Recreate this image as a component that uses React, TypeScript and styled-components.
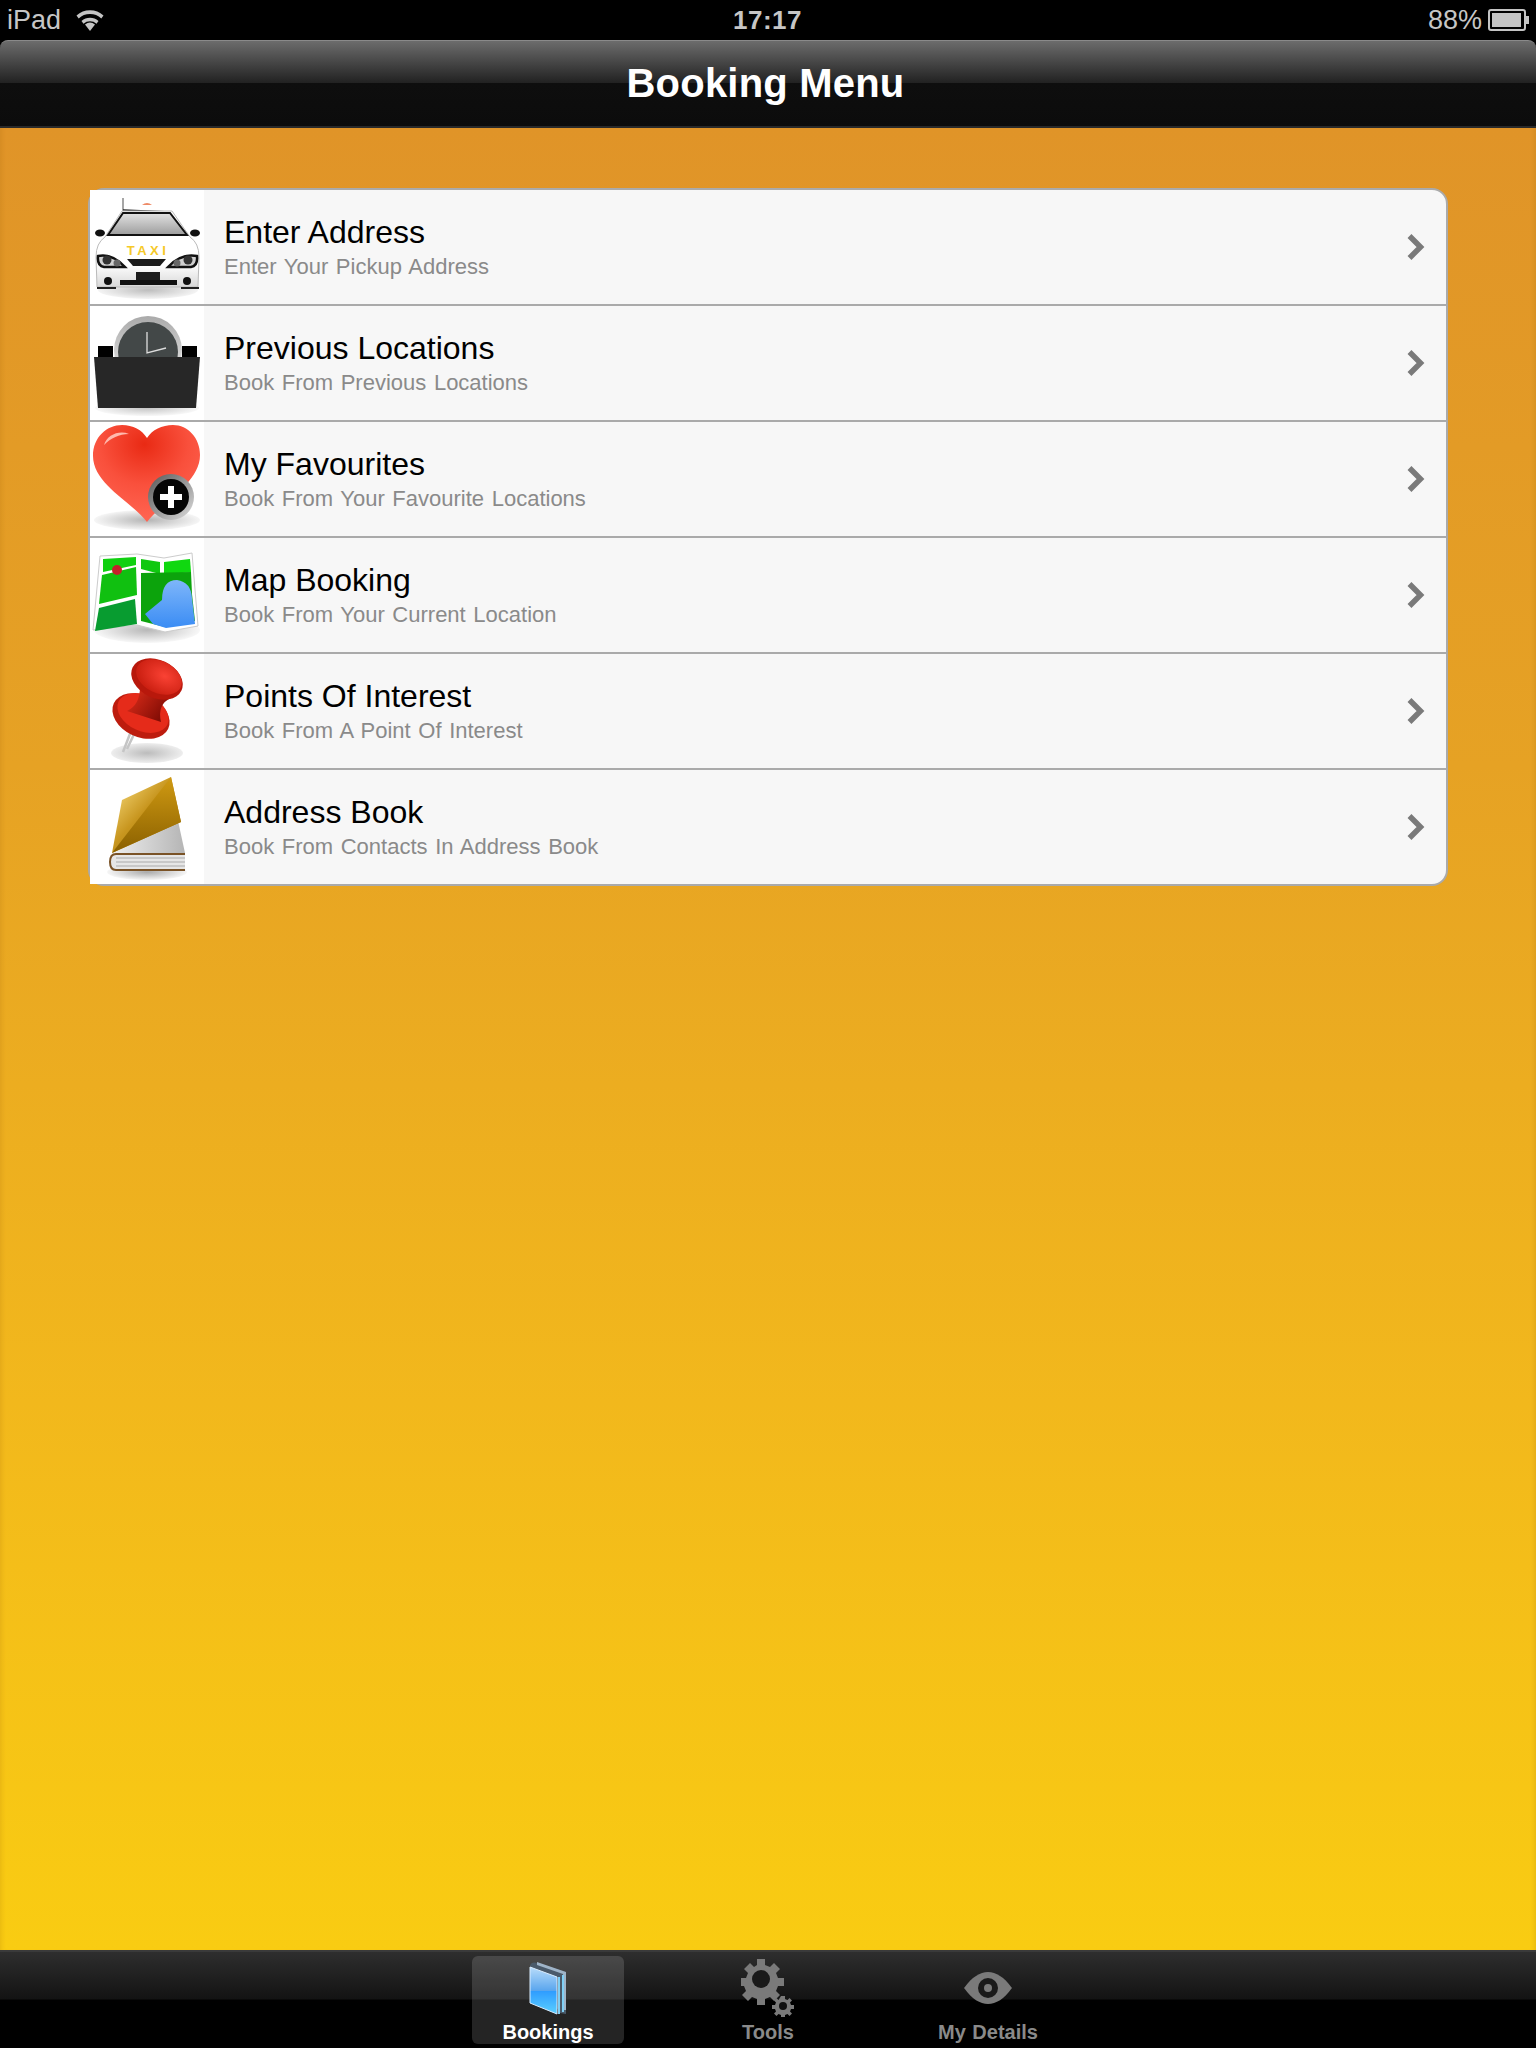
import React from "react";
import styled, { createGlobalStyle } from "styled-components";
import { ChevronRight } from "lucide-react";

const GlobalStyle = createGlobalStyle`
  html, body {
    margin: 0;
    padding: 0;
    background: #000;
    font-family: "Liberation Sans", Arial, sans-serif;
  }
`;

const TaxiIcon = () => (
  <IconSvg viewBox="0 0 114 114">
    <defs>
      <linearGradient id="taxiGlass" x1="0" y1="0" x2="0" y2="1">
        <stop offset="0" stopColor="#e2e2e2" />
        <stop offset="1" stopColor="#9d9d9d" />
      </linearGradient>
      <linearGradient id="taxiBody" x1="0" y1="0" x2="0" y2="1">
        <stop offset="0" stopColor="#fff" />
        <stop offset="0.7" stopColor="#fff" />
        <stop offset="1" stopColor="#d8d8d8" />
      </linearGradient>
      <radialGradient id="shadowFill" cx="0.5" cy="0.5" r="0.5">
        <stop offset="0" stopColor="#bdbdbd" />
        <stop offset="1" stopColor="#f4f4f4" />
      </radialGradient>
    </defs>
    <ellipse cx="58" cy="100" rx="50" ry="9" fill="url(#shadowFill)" />
    <path d="M33 8v14" stroke="#888" strokeWidth="1.5" />
    <path d="M52 15q5-4 10 0z" fill="#ee8a66" />
    <path d="M33 20l47 2" stroke="#222" strokeWidth="1.5" />
    <path d="M32 21h50l18 26q9 6 9 20l-1 30H7l-1-30q0-14 9-20z" fill="url(#taxiBody)" stroke="#bbb" strokeWidth="1" />
    <path d="M18 45l15-22h47l17 22z" fill="url(#taxiGlass)" stroke="#111" strokeWidth="2" />
    <ellipse cx="10" cy="43" rx="5" ry="3.5" fill="#111" />
    <ellipse cx="105" cy="43" rx="5" ry="3.5" fill="#111" />
    <TaxiLabel x="58" y="64.500" textAnchor="middle">TAXI</TaxiLabel>
    <path d="M8 66q14-3 27 11H14q-7-1-6-11z" fill="#d0d0d0" stroke="#111" strokeWidth="2.500" />
    <path d="M107 66q-16-3-29 11h23q7-1 6-11z" fill="#d0d0d0" stroke="#111" strokeWidth="2.500" />
    <circle cx="17" cy="70" r="4.500" fill="#333" />
    <circle cx="27" cy="73" r="3.500" fill="#666" />
    <circle cx="98" cy="70" r="4.500" fill="#333" />
    <circle cx="87" cy="73" r="3.500" fill="#666" />
    <path d="M37 69h39l-6 7H43z" fill="#1a1a1a" />
    <rect x="46" y="82" width="24" height="10" fill="#1c1c1c" />
    <rect x="30" y="90" width="57" height="5" fill="#111" />
    <circle cx="18" cy="91" r="4" fill="#111" />
    <circle cx="97" cy="91" r="4" fill="#111" />
    <path d="M7 98h19M91 98h18" stroke="#222" strokeWidth="2" />
  </IconSvg>
);

const ClockIcon = () => (
  <IconSvg viewBox="0 0 114 114">
    <defs>
      <linearGradient id="clockRing" x1="0" y1="0" x2="0" y2="1">
        <stop offset="0" stopColor="#aaa" />
        <stop offset="1" stopColor="#eee" />
      </linearGradient>
      <radialGradient id="clockShadow" cx="0.5" cy="0.5" r="0.5">
        <stop offset="0" stopColor="#c4c4c4" />
        <stop offset="1" stopColor="#f8f8f8" />
      </radialGradient>
    </defs>
    <ellipse cx="57" cy="102" rx="52" ry="8" fill="url(#clockShadow)" />
    <circle cx="58" cy="44" r="34" fill="url(#clockRing)" />
    <circle cx="58" cy="46" r="30" fill="#434848" />
    <path d="M57 26v21l19-5" fill="none" stroke="#ddd" strokeWidth="1.3" />
    <rect x="8" y="40" width="15" height="12" fill="#000" />
    <rect x="92" y="40" width="15" height="12" fill="#000" />
    <path d="M4 51h106l-4 51H8z" fill="#272727" />
  </IconSvg>
);

const HeartIcon = () => (
  <IconSvg viewBox="0 0 114 114">
    <defs>
      <radialGradient id="heartFill" cx="0.48" cy="0.2" r="0.75">
        <stop offset="0" stopColor="#e92a14" />
        <stop offset="0.55" stopColor="#f9503c" />
        <stop offset="1" stopColor="#ff6350" />
      </radialGradient>
      <radialGradient id="heartShadow" cx="0.5" cy="0.5" r="0.5">
        <stop offset="0" stopColor="#b4b4b4" />
        <stop offset="1" stopColor="#f6f6f6" />
      </radialGradient>
      <linearGradient id="badgeRing" x1="0" y1="0" x2="1" y2="1">
        <stop offset="0" stopColor="#555" />
        <stop offset="1" stopColor="#ddd" />
      </linearGradient>
    </defs>
    <ellipse cx="57" cy="98" rx="53" ry="10" fill="url(#heartShadow)" />
    <path d="M57 100C42 80 3 62 3 34 3 15 17 3 32 3c11 0 20 5 25 13C62 8 72 3 83 3c15 0 27 13 27 30 0 28-38 47-53 67z" fill="url(#heartFill)" />
    <path d="M14 23c3-10 15-15 25-11-10 0-18 4-25 11z" fill="#ffb9ae" />
    <circle cx="81" cy="75" r="23" fill="url(#badgeRing)" />
    <circle cx="81" cy="75" r="18" fill="#050505" />
    <path d="M81 64v22M70 75h22" stroke="#fff" strokeWidth="6" />
  </IconSvg>
);

const MapIcon = () => (
  <IconSvg viewBox="0 0 114 114">
    <defs>
      <linearGradient id="mapWater" x1="0" y1="0" x2="0" y2="1">
        <stop offset="0" stopColor="#7eb6fa" />
        <stop offset="1" stopColor="#3a8cf4" />
      </linearGradient>
      <radialGradient id="mapShadow" cx="0.5" cy="0.5" r="0.5">
        <stop offset="0" stopColor="#b8b8b8" />
        <stop offset="1" stopColor="#f8f8f8" />
      </radialGradient>
    </defs>
    <ellipse cx="57" cy="92" rx="53" ry="13" fill="url(#mapShadow)" />
    <path d="M10 18l37-2 27 4 28-5 6 73-33 6-28-7-44 5z" fill="#fff" stroke="#ccc" strokeWidth="1" />
    <path d="M13 21l33-2v8l-33 7z" fill="#10d010" />
    <path d="M12 37l34-8 1 28-38 9z" fill="#10c010" />
    <path d="M9 70l36-9 2 25-42 7z" fill="#089c30" />
    <path d="M51 21l19 3v12l-19-5z" fill="#10c810" />
    <path d="M74 24l26-3 1 13-27 3z" fill="#10d810" />
    <path d="M51 35l50-1 1 22 3 27-30 6-24-6z" fill="#0ca30c" />
    <path d="M55 76l17-14q0-20 15-20 14 2 15 18l3 26-29 4-13-4z" fill="url(#mapWater)" />
    <circle cx="27" cy="32" r="5" fill="#c4202a" />
  </IconSvg>
);

const PinIcon = () => (
  <IconSvg viewBox="0 0 114 114">
    <defs>
      <linearGradient id="pinStem" x1="0" y1="0" x2="1" y2="0.6">
        <stop offset="0" stopColor="#e6301c" />
        <stop offset="1" stopColor="#7e0b04" />
      </linearGradient>
      <radialGradient id="pinHead" cx="0.6" cy="0.4" r="0.6">
        <stop offset="0" stopColor="#fa4234" />
        <stop offset="1" stopColor="#cc2012" />
      </radialGradient>
      <radialGradient id="pinShadow" cx="0.5" cy="0.5" r="0.5">
        <stop offset="0" stopColor="#bcbcbc" />
        <stop offset="1" stopColor="#eee" />
      </radialGradient>
    </defs>
    <ellipse cx="57" cy="99" rx="36" ry="10" fill="url(#pinShadow)" />
    <path d="M43 72L33 98M47 74l-10 21" stroke="#c5c5c5" strokeWidth="2.5" />
    <ellipse cx="51" cy="62" rx="30" ry="21" transform="rotate(25 51 62)" fill="#bd1c0e" />
    <ellipse cx="53" cy="59" rx="27" ry="18" transform="rotate(25 53 59)" fill="#e52b1a" />
    <path d="M50 33l31 11q-14 6-10 24L37 57q13-6 13-24z" fill="url(#pinStem)" />
    <ellipse cx="67" cy="25" rx="27" ry="19" transform="rotate(25 67 25)" fill="#b8180c" />
    <ellipse cx="69" cy="23" rx="24" ry="16" transform="rotate(25 69 23)" fill="url(#pinHead)" />
  </IconSvg>
);

const BookIcon = () => (
  <IconSvg viewBox="0 0 114 114">
    <defs>
      <linearGradient id="bookCover" x1="0" y1="0" x2="1" y2="1">
        <stop offset="0" stopColor="#ffe68a" />
        <stop offset="0.45" stopColor="#c8961f" />
        <stop offset="1" stopColor="#8a6300" />
      </linearGradient>
      <linearGradient id="bookFold" x1="0" y1="0" x2="0" y2="1">
        <stop offset="0" stopColor="#d09a12" />
        <stop offset="1" stopColor="#8a6000" />
      </linearGradient>
      <linearGradient id="bookPage" x1="0" y1="0" x2="1" y2="0">
        <stop offset="0" stopColor="#eee" />
        <stop offset="1" stopColor="#b5b5b5" />
      </linearGradient>
      <radialGradient id="bookShadow" cx="0.5" cy="0.5" r="0.5">
        <stop offset="0" stopColor="#aaa" />
        <stop offset="1" stopColor="#f6f6f6" />
      </radialGradient>
    </defs>
    <ellipse cx="57" cy="102" rx="40" ry="8" fill="url(#bookShadow)" />
    <path d="M23 83l65-32 7 32z" fill="url(#bookPage)" />
    <path d="M32 30L81 7l10 45-69 31z" fill="url(#bookCover)" />
    <path d="M81 7l10 45-69 31z" fill="url(#bookFold)" />
    <path d="M95 84H26q-6 0-6 8 0 8 6 8h69" fill="#e6e6e6" stroke="#7a5327" strokeWidth="2" />
    <path d="M26 88h69M26 92h69M26 96h69" stroke="#aaa" strokeWidth="1" />
  </IconSvg>
);

const WifiIcon = () => (
  <svg width="32" height="24" viewBox="0 0 32 24">
    <path d="M16 23l-5-6.500a8 8 0 0 1 10 0z" fill="#c4c4c4" />
    <path d="M7.500 13a13 13 0 0 1 17 0l-2 2.700a10 10 0 0 0-13 0z" fill="#c4c4c4" />
    <path d="M2.500 7.500a20 20 0 0 1 27 0l-2.200 3a16.500 16.500 0 0 0-22.600 0z" fill="#c4c4c4" />
  </svg>
);

const BatteryIcon = () => (
  <svg width="42" height="22" viewBox="0 0 42 22">
    <rect x="1" y="1" width="36" height="20" rx="2" fill="none" stroke="#c4c4c4" strokeWidth="2" />
    <rect x="4" y="4" width="29" height="14" fill="#c4c4c4" />
    <rect x="38" y="7" width="3" height="8" fill="#c4c4c4" />
  </svg>
);

const BlueBookTab = () => (
  <svg width="38" height="54" viewBox="0 0 38 54">
    <defs>
      <linearGradient id="tabBook" x1="0" y1="0" x2="0" y2="1">
        <stop offset="0" stopColor="#b8dcfa" />
        <stop offset="0.5" stopColor="#5aa6ee" />
        <stop offset="0.52" stopColor="#2f9dff" />
        <stop offset="1" stopColor="#5cd0ff" />
      </linearGradient>
    </defs>
    <path d="M1 5q1-5 7-3l29 9v42l-6-1z" fill="#4a5a6a" />
    <path d="M8 1l29 10v38h-3V13L8 4z" fill="#9fb4c8" />
    <path d="M1 6l27 10v37L1 42z" fill="url(#tabBook)" stroke="#d8ecff" strokeWidth="1" />
    <path d="M29 16h2v37h-2zM33 14h2v37h-2z" fill="#7fd0f6" />
  </svg>
);

const GearsTab = () => (
  <svg width="54" height="58" viewBox="0 0 54 58">
    <g fill="#7a7a7a">
      <path d="M16 0h8v6l5 2 4-4 6 6-4 4 2 5h6v8h-6l-2 5 4 4-6 6-4-4-5 2v6h-8v-6l-5-2-4 4-6-6 4-4-2-5H0v-8h5l2-5-4-4 6-6 4 4 3-2z" />
      <path d="M40 37h4v3l2.500 1 2-2 2.500 2.500-2 2 1 2.500h3v4h-3l-1 2.500 2 2-2.500 2.500-2-2-2.500 1v3h-4v-3l-2.500-1-2 2-2.500-2.500 2-2-1-2.500h-3v-4h3l1-2.500-2-2 2.500-2.500 2 2z" />
    </g>
    <circle cx="20" cy="20" r="9" fill="#1a1a1a" />
    <circle cx="42" cy="47" r="4" fill="#111" />
  </svg>
);

const EyeTab = () => (
  <svg width="48" height="32" viewBox="0 0 48 32">
    <path d="M0 16C8 5 16 0 24 0s16 5 24 16c-8 11-16 16-24 16S8 27 0 16z" fill="#7a7a7a" />
    <circle cx="24" cy="16" r="10" fill="#1a1a1a" />
    <circle cx="24" cy="16" r="4" fill="#7a7a7a" />
  </svg>
);

const menuItems = [
  { title: "Enter Address", subtitle: "Enter Your Pickup Address", icon: <TaxiIcon /> },
  { title: "Previous Locations", subtitle: "Book From Previous Locations", icon: <ClockIcon /> },
  { title: "My Favourites", subtitle: "Book From Your Favourite Locations", icon: <HeartIcon /> },
  { title: "Map Booking", subtitle: "Book From Your Current Location", icon: <MapIcon /> },
  { title: "Points Of Interest", subtitle: "Book From A Point Of Interest", icon: <PinIcon /> },
  { title: "Address Book", subtitle: "Book From Contacts In Address Book", icon: <BookIcon /> },
];

const tabs = [
  { label: "Bookings", icon: <BlueBookTab />, active: true },
  { label: "Tools", icon: <GearsTab />, active: false },
  { label: "My Details", icon: <EyeTab />, active: false },
];

const App = () => {
  return (
    <>
      <GlobalStyle />
      <Page>
        <StatusBar>
          <StatusLeft>
            <span>iPad</span>
            <WifiIcon />
          </StatusLeft>
          <StatusTime>17:17</StatusTime>
          <StatusRight>
            <span>88%</span>
            <BatteryIcon />
          </StatusRight>
        </StatusBar>
        <NavBar>
          <NavTitle>Booking Menu</NavTitle>
        </NavBar>
        <Main>
          <MenuCard>
            {menuItems.map((item) => (
              <MenuRow key={item.title}>
                <IconCell>{item.icon}</IconCell>
                <RowText>
                  <RowTitle>{item.title}</RowTitle>
                  <RowSubtitle>{item.subtitle}</RowSubtitle>
                </RowText>
                <Chevron size={44} strokeWidth={3} strokeLinecap="butt" strokeLinejoin="miter" />
              </MenuRow>
            ))}
          </MenuCard>
        </Main>
        <TabBar>
          {tabs.map((tab) => (
            <TabItem key={tab.label} $active={tab.active}>
              <TabIcon>{tab.icon}</TabIcon>
              <TabLabel $active={tab.active}>{tab.label}</TabLabel>
            </TabItem>
          ))}
        </TabBar>
      </Page>
    </>
  );
};

export default App;

const Page = styled.div`
  width: 1536px;
  height: 2048px;
  display: flex;
  flex-direction: column;
  overflow: hidden;
`;

const StatusBar = styled.div`
  height: 40px;
  flex: none;
  display: grid;
  grid-template-columns: 1fr auto 1fr;
  align-items: center;
  padding: 0 6px 0 7px;
  box-sizing: border-box;
  background: #000;
  color: #c6c6c6;
  font-size: 27px;
`;

const StatusLeft = styled.div`
  display: flex;
  align-items: center;
  gap: 13px;
`;

const StatusTime = styled.div`
  font-size: 26px;
  letter-spacing: 0.5px;
  font-weight: 700;
  margin-left: -2px;
`;

const StatusRight = styled.div`
  display: flex;
  align-items: center;
  justify-content: flex-end;
  gap: 6px;
`;

const NavBar = styled.div`
  height: 88px;
  flex: none;
  display: flex;
  align-items: center;
  justify-content: center;
  box-sizing: border-box;
  border-radius: 8px 8px 0 0;
  border-top: 1px solid #8a8a8a;
  border-bottom: 2px solid #2a2a2a;
  background: linear-gradient(#6c6c6c 0, #222 49%, #0e0e0e 50%, #0c0c0c 100%);
`;

const NavTitle = styled.div`
  color: #fff;
  font-size: 40px;
  font-weight: 700;
  letter-spacing: 0.2px;
  margin: 0 5px 0 0;
`;

const Main = styled.main`
  flex: 1;
  padding: 60px 88px 0;
  background: linear-gradient(#e09428 0, #e6a224 35%, #f2b81c 70%, #f9cc12 100%);
  box-shadow: inset 5px 0 5px -4px rgba(150, 90, 10, 0.2), inset -5px 0 5px -4px rgba(150, 90, 10, 0.2);
`;

const MenuCard = styled.div`
  border: 2px solid #aaa;
  border-radius: 16px;
  background: #f7f7f7;
  overflow: visible;
`;

const MenuRow = styled.div`
  height: 116px;
  box-sizing: border-box;
  display: flex;
  align-items: center;
  border-bottom: 2px solid #aaa;

  &:last-child {
    height: 114px;
    border-bottom: none;
  }
`;

const IconCell = styled.div`
  width: 114px;
  height: 100%;
  flex: none;
  background: #fff;
`;

const IconSvg = styled.svg`
  display: block;
  width: 114px;
  height: 114px;
`;

const TaxiLabel = styled.text`
  fill: #f6c928;
  font-family: "Liberation Sans", Arial, sans-serif;
  font-size: 13px;
  font-weight: 700;
  letter-spacing: 3.5px;
`;

const RowText = styled.div`
  flex: 1;
  padding-left: 20px;
  margin-top: -1px;
`;

const RowTitle = styled.div`
  color: #000;
  font-size: 32px;
  line-height: 38px;
`;

const RowSubtitle = styled.div`
  color: #8a8a8a;
  font-size: 22px;
  line-height: 26px;
  margin-top: 3px;
  word-spacing: 1.5px;
`;

const Chevron = styled(ChevronRight)`
  flex: none;
  color: #7a7a7a;
  margin-right: 9px;
`;

const TabBar = styled.nav`
  height: 98px;
  flex: none;
  box-sizing: border-box;
  display: flex;
  justify-content: center;
  gap: 68px;
  padding-top: 4px;
  border-top: 2px solid #3a3a3a;
  background: linear-gradient(#2e2e2e 0, #131313 49%, #000 50%, #000 100%);
`;

const TabItem = styled.div<{ $active: boolean }>`
  width: 152px;
  height: 88px;
  display: flex;
  flex-direction: column;
  align-items: center;
  border-radius: 6px;
  background: ${(p) => (p.$active ? "rgba(255, 255, 255, 0.14)" : "transparent")};
`;

const TabIcon = styled.div`
  height: 65px;
  display: flex;
  align-items: center;
  justify-content: center;
`;

const TabLabel = styled.div<{ $active: boolean }>`
  color: ${(p) => (p.$active ? "#fff" : "#8a8a8a")};
  font-size: 20px;
  font-weight: 700;
  line-height: 24px;
  word-spacing: 1px;
`;
